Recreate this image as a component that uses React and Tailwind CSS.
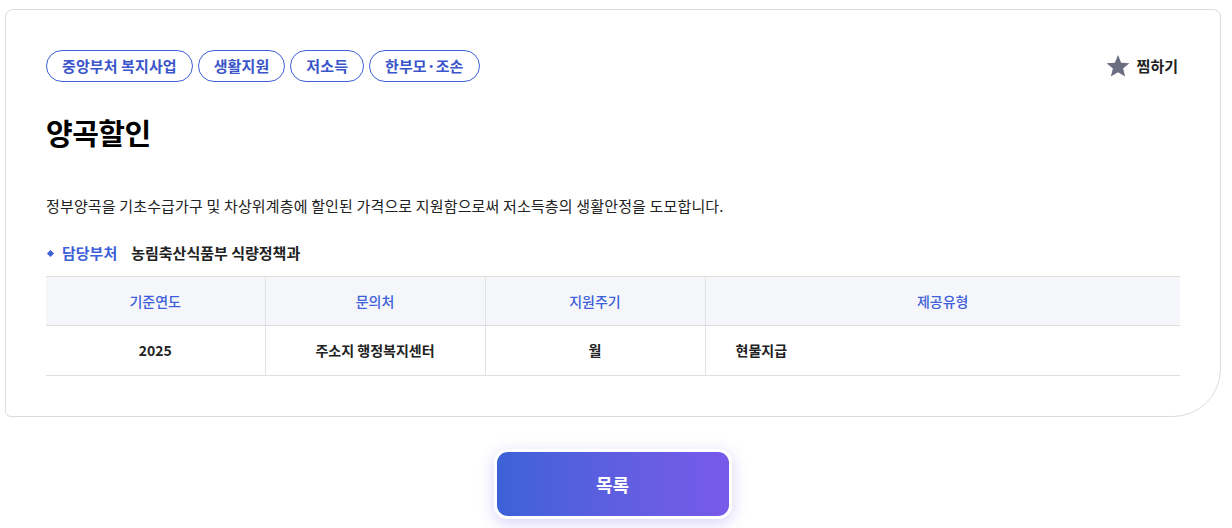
const tags = ["중앙부처 복지사업", "생활지원", "저소득", "한부모·조손"];

export default function App() {
  return (
    <div
      className="w-[1232px] h-[528px] bg-white overflow-hidden"
      style={{ fontFamily: '"Noto Sans CJK KR", "Noto Sans", sans-serif' }}
    >
      <div className="ml-[5px] mt-[9px] w-[1216px] h-[408px] border border-[#dcdcdc] rounded-t-[8px] rounded-bl-[6px] rounded-br-[48px] px-[40px] pt-[40px]">
        {/* tags + favorite */}
        <div className="flex items-center justify-between">
          <div className="flex gap-[5px]">
            {tags.map((t) => (
              <span
                key={t}
                className="h-[32px] px-[15px] flex items-center rounded-full border border-[#3d5fd9] text-[#3a55c9] text-[15px] font-bold tracking-[0.1px]"
              >
                {t}
              </span>
            ))}
          </div>
          <button className="flex items-center gap-[6px] mr-[2px] text-[15px] font-bold text-[#222]">
            <svg className="w-[26px] h-[26px]" viewBox="0 0 24 24" fill="#6b6e80">
              <path d="M12 1.8l2.9 7.1 7.6.5-5.8 4.9 1.9 7.5L12 17.7l-6.6 4.1 1.9-7.5-5.8-4.9 7.6-.5z" />
            </svg>
            찜하기
          </button>
        </div>

        {/* title */}
        <h1 className="mt-[30px] text-[29px] font-bold text-black leading-[40px] tracking-[-0.5px]">
          양곡할인
        </h1>

        {/* description */}
        <p className="mt-[43px] text-[15px] text-[#222] leading-[22px] tracking-[0.15px]">
          정부양곡을 기초수급가구 및 차상위계층에 할인된 가격으로 지원함으로써 저소득층의 생활안정을 도모합니다.
        </p>

        {/* department */}
        <div className="mt-[25px] flex items-center text-[15px] font-bold leading-[22px]">
          <span className="w-[5px] h-[5px] bg-[#3d5fd9] rotate-45 ml-[2px] mr-[9px]" />
          <span className="text-[#3d5fd9]">담당부처</span>
          <span className="ml-[14px] text-[#222]">농림축산식품부 식량정책과</span>
        </div>

        {/* table */}
        <table className="mt-[12px] w-[1134px] border-collapse text-[14px]">
          <thead>
            <tr className="bg-[#f5f6fa] h-[49px] border-y border-[#dedede]">
              <th className="w-[219px] font-medium text-[#3d5fd9] border-r border-[#e2e2e2]">기준연도</th>
              <th className="w-[220px] font-medium text-[#3d5fd9] border-r border-[#e2e2e2]">문의처</th>
              <th className="w-[220px] font-medium text-[#3d5fd9] border-r border-[#e2e2e2]">지원주기</th>
              <th className="font-medium text-[#3d5fd9]">제공유형</th>
            </tr>
          </thead>
          <tbody>
            <tr className="h-[50px] border-b border-[#dedede]">
              <td className="text-center font-bold text-[#222] border-r border-[#e2e2e2]">2025</td>
              <td className="text-center font-bold text-[#222] border-r border-[#e2e2e2]">주소지 행정복지센터</td>
              <td className="text-center font-bold text-[#222] border-r border-[#e2e2e2]">월</td>
              <td className="pl-[30px] font-bold text-[#222]">현물지급</td>
            </tr>
          </tbody>
        </table>
      </div>

      {/* list button */}
      <div className="flex justify-center mt-[32px] pr-[7px]">
        <button className="w-[238px] h-[70px] shrink-0 rounded-[14px] border-[3px] border-white bg-gradient-to-r from-[#3c62d7] to-[#785ae9] text-white text-[18px] font-bold shadow-[0_4px_16px_rgba(110,90,230,0.28)]">
          목록
        </button>
      </div>
    </div>
  );
}
